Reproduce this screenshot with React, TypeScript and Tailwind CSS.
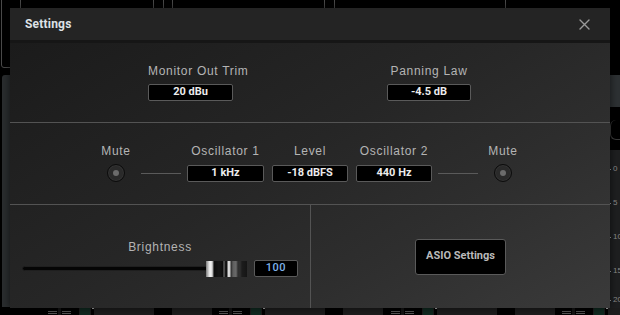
import React from "react";

const labelFont = { fontFamily: '"Liberation Sans", Arial, sans-serif' };
const valueFont = { fontFamily: 'Roboto, "Liberation Sans", sans-serif' };

function Label({ children }: { children: React.ReactNode }) {
  return (
    <div className="h-[14px] text-[12px] leading-[14px] tracking-[0.7px] text-[#b4b4b4] whitespace-nowrap" style={labelFont}>
      {children}
    </div>
  );
}

function ValueBox({ value, width, tone = "text-[#ececec] font-bold" }: { value: string; width: string; tone?: string }) {
  return (
    <div
      className={`${width} h-[17px] flex items-center justify-center bg-black border border-[#5a5a5a] rounded-[2px] text-[11px] ${tone}`}
      style={valueFont}
    >
      {value}
    </div>
  );
}

function Knob() {
  return (
    <div className="w-[18px] h-[18px] -mt-[1px] rounded-full border border-[#0b0b0b] bg-[#2a2a2a] flex items-center justify-center shadow-[inset_0_0_0_1px_#333]">
      <div className="w-[6px] h-[6px] rounded-full bg-[#6c6c6c]" />
    </div>
  );
}

function Connector() {
  return (
    <div className="flex flex-col w-[40px]">
      <div className="h-[14px]" />
      <div className="h-[17px] mt-[7px] flex items-center">
        <div className="w-full h-px bg-[#5a5a5a]" />
      </div>
    </div>
  );
}

function MixerBackdrop() {
  const blocks = [0, 171, 343, 514];
  return (
    <>
      {/* strip dividers above the dialog */}
      <div className="absolute top-0 left-[153px] w-px h-[8px] bg-[#4a4a4a]" />
      <div className="absolute top-0 left-[163px] w-px h-[8px] bg-[#4a4a4a]" />
      <div className="absolute top-0 left-[172px] w-px h-[8px] bg-[#4a4a4a]" />
      <div className="absolute top-0 left-[324px] w-px h-[8px] bg-[#4a4a4a]" />
      <div className="absolute top-0 left-[334px] w-px h-[8px] bg-[#4a4a4a]" />
      <div className="absolute top-0 left-[505px] w-px h-[8px] bg-[#4a4a4a]" />
      {/* left panel edges */}
      <div className="absolute left-[1px] -top-[4px] w-[20px] h-[72px] rounded-[3px] border border-[#4a4a4a]" />
      <div className="absolute left-[2px] top-[75px] w-[12px] h-[232px] rounded-t-[3px] bg-[#2a2d2f]" />
      {/* right meter */}
      <div className="absolute left-[610px] top-[75px] w-[10px] h-[32px] bg-[#2d3133]" />
      <div className="absolute left-[610px] top-[120px] w-[14px] h-[20px] rounded-l-[6px] bg-black border-l border-b border-[#3a3a3a]" />
      <div className="absolute left-[610px] top-[150px] w-[10px] h-[160px] bg-[#1e1f20]" />
      {[["0", 169], ["5", 203], ["10", 237], ["15", 271], ["20", 300]].map(([t, y]) => (
        <div
          key={t}
          className="absolute left-[610px] flex items-center gap-[2px] text-[8px] leading-[10px] text-[#8a8a8a]"
          style={{ top: (y as number) - 5, ...labelFont }}
        >
          <span className="w-px h-px bg-[#999]" />
          <span>{t}</span>
        </div>
      ))}
      {/* bottom channel strip tops */}
      {blocks.map((x) => (
        <React.Fragment key={x}>
          <div className="absolute top-[309px] w-[9px] h-[6px] flex flex-col justify-center gap-[1px]" style={{ left: 48 + x }}>
            <div className="h-px bg-[#555]" />
            <div className="h-px bg-[#555]" />
          </div>
          <div className="absolute top-[308px] w-[3px] h-[7px] bg-[#141414]" style={{ left: 58 + x }} />
          <div className="absolute top-[309px] w-[9px] h-[6px] flex flex-col justify-center gap-[1px]" style={{ left: 62 + x }}>
            <div className="h-px bg-[#555]" />
            <div className="h-px bg-[#555]" />
          </div>
          <div className="absolute top-[308px] w-[12px] h-[7px] bg-[#102a20] border-x border-[#1c1c1c]" style={{ left: 79 + x }} />
          <div className="absolute top-[308px] w-[3px] h-px bg-[#aaa]" style={{ left: 92 + x }} />
          <div className="absolute top-[308px] w-[66px] h-[7px] bg-[#1d1d1d]" style={{ left: 94 + x }} />
          <div className="absolute top-[308px] w-[8px] h-[7px] bg-black" style={{ left: 154 + x }} />
          <div className="absolute top-[308px] w-[8px] h-[7px] bg-black" style={{ left: 164 + x }} />
          <div className="absolute top-[308px] w-[40px] h-[7px] bg-[#1d1d1d]" style={{ left: 172 + x }} />
        </React.Fragment>
      ))}
    </>
  );
}

export default function App() {
  return (
    <div className="relative w-[620px] h-[315px] bg-black overflow-hidden">
      <MixerBackdrop />

      <div className="absolute left-[10px] top-[8px] w-[600px] h-[300px] flex flex-col shadow-[0_0_8px_rgba(0,0,0,0.6)]">
        {/* title bar */}
        <div className="h-[32px] bg-[#242424] flex items-center justify-between pl-[15px] pr-[20px]">
          <span className="text-[12px] font-bold text-[#dde1e6] tracking-[0.2px]" style={valueFont}>
            Settings
          </span>
          <svg width="11" height="11" viewBox="0 0 11 11" className="mt-[1px]">
            <path d="M1 1L10 10M10 1L1 10" stroke="#9a9a9a" strokeWidth="1.4" strokeLinecap="round" />
          </svg>
        </div>
        <div className="h-[3px] bg-[#161616]" />

        <div className="flex-1 flex flex-col bg-[linear-gradient(150deg,#1b1b1b_0%,#262626_45%,#2e2e2e_70%,#3a3a3a_100%)]">
          {/* monitor / panning */}
          <div className="h-[80px] border-b border-[#535353] flex pt-[21px]">
            <div className="ml-[138px] w-[102px] flex flex-col items-start">
              <Label>Monitor Out Trim</Label>
              <div className="mt-[6px]">
                <ValueBox value="20 dBu" width="w-[85px]" />
              </div>
            </div>
            <div className="ml-[137px] w-[84px] flex flex-col items-center">
              <Label>Panning Law</Label>
              <div className="mt-[6px]">
                <ValueBox value="-4.5 dB" width="w-[84px]" />
              </div>
            </div>
          </div>

          {/* oscillator */}
          <div className="h-[82px] border-b border-[#535353] flex items-start pt-[21px]">
            <div className="ml-[91px] w-[30px] flex flex-col items-center">
              <Label>Mute</Label>
              <div className="h-[17px] mt-[7px] flex items-center">
                <Knob />
              </div>
            </div>
            <div className="ml-[10px]">
              <Connector />
            </div>
            <div className="ml-[6px] flex flex-col items-center">
              <Label>Oscillator 1</Label>
              <div className="mt-[7px]">
                <ValueBox value="1 kHz" width="w-[77px]" />
              </div>
            </div>
            <div className="ml-[8px] flex flex-col items-center">
              <Label>Level</Label>
              <div className="mt-[7px]">
                <ValueBox value="-18 dBFS" width="w-[76px]" />
              </div>
            </div>
            <div className="ml-[8px] flex flex-col items-center">
              <Label>Oscillator 2</Label>
              <div className="mt-[7px]">
                <ValueBox value="440 Hz" width="w-[76px]" />
              </div>
            </div>
            <div className="ml-[6px]">
              <Connector />
            </div>
            <div className="ml-[10px] w-[30px] flex flex-col items-center">
              <Label>Mute</Label>
              <div className="h-[17px] mt-[7px] flex items-center">
                <Knob />
              </div>
            </div>
          </div>

          {/* brightness / asio */}
          <div className="flex-1 flex">
            <div className="w-[301px] border-r border-[#535353] flex flex-col items-center pt-[35px]">
              <Label>Brightness</Label>
              <div className="mt-[6px] w-full flex items-center pl-[12px]">
                <div className="w-[188px] h-[5px] rounded-full bg-[#050505] border border-[#1f1f1f]" />
                <div className="-ml-[4px] w-[41px] h-[16px] bg-[linear-gradient(to_right,#7a7a7a_0px,#bdbdbd_2px,#f4f4f4_4px,#dcdcdc_6px,#8a8a8a_7px,#0c0c0c_8px,#161616_13px,#0a0a0a_17px,#7a7a7a_18px,#1a1a1a_19px,#0e0e0e_21px,#dedede_22px,#cfcfcf_24px,#2c2c2c_25px,#5e5e5e_27px,#6a6a6a_30px,#2e2e2e_32px,#303030_34px,#1c1c1c_36px,#151515_41px)]" />
                <div className="ml-[7px]">
                  <ValueBox value="100" width="w-[44px]" tone="text-[#7fb2ea] font-medium tracking-[0.5px]" />
                </div>
              </div>
            </div>
            <div className="flex-1 flex items-center justify-center">
              <button
                className="w-[91px] h-[36px] bg-black border border-[#5a5a5a] rounded-[3px] text-[11px] font-bold text-[#b9b9b9]"
                style={valueFont}
              >
                ASIO Settings
              </button>
            </div>
          </div>
        </div>
      </div>
    </div>
  );
}
